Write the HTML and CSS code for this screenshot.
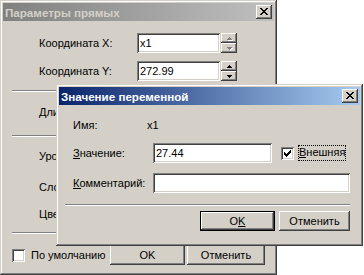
FILE: index.html
```html
<!DOCTYPE html>
<html lang="ru">
<head>
    <meta charset="UTF-8">
    <title>Параметры прямых</title>
    <link rel="stylesheet" href="styles.css">
</head>
<body>
    <div class="desktop">
        <!-- back dialog (inactive) -->
        <div class="window back">
            <div class="titlebar inactive">
                <span class="title">Параметры прямых</span>
                <span class="btn close"><svg width="8" height="7" viewBox="0 0 8 7"><path d="M0 0h2v1H0zM6 0h2v1H6zM1 1h2v1H1zM5 1h2v1H5zM2 2h4v1H2zM3 3h2v1H3zM2 4h4v1H2zM1 5h2v1H1zM5 5h2v1H5zM0 6h2v1H0zM6 6h2v1H6z"/></svg></span>
            </div>
            <div class="back-body">
                <div class="row first">
                    <span class="lbl">Координата X:</span>
                    <span class="edit coord">x1</span>
                    <span class="spin disabled">
                        <span class="btn sb"><svg width="5" height="3" viewBox="0 0 5 3"><path d="M2 0h1v1h1v1h1v1H0V2h1V1h1z"/></svg></span>
                        <span class="btn sb"><svg width="5" height="3" viewBox="0 0 5 3"><path d="M0 0h5v1H4v1H3v1H2V2H1V1H0z"/></svg></span>
                    </span>
                </div>
                <div class="row r2">
                    <span class="lbl">Координата Y:</span>
                    <span class="edit coord">272.99</span>
                    <span class="spin">
                        <span class="btn sb"><svg width="5" height="3" viewBox="0 0 5 3"><path d="M2 0h1v1h1v1h1v1H0V2h1V1h1z"/></svg></span>
                        <span class="btn sb"><svg width="5" height="3" viewBox="0 0 5 3"><path d="M0 0h5v1H4v1H3v1H2V2H1V1H0z"/></svg></span>
                    </span>
                </div>
                <div class="sep s1"></div>
                <div class="row r3"><span class="lbl">Длина</span></div>
                <div class="sep s2"></div>
                <div class="row r4"><span class="lbl">Уровень</span></div>
                <div class="row r5"><span class="lbl">Слой</span></div>
                <div class="row r6"><span class="lbl">Цвет</span></div>
                <div class="sep s3"></div>
                <div class="footer">
                    <span class="check"></span>
                    <span class="check-lbl">По умолчанию</span>
                    <span class="btn push ok-back">OK</span>
                    <span class="btn push cancel-back">Отменить</span>
                </div>
            </div>
        </div>

        <!-- front dialog (active) -->
        <div class="window front">
            <div class="titlebar active">
                <span class="title">Значение переменной</span>
                <span class="btn close"><svg width="8" height="7" viewBox="0 0 8 7"><path d="M0 0h2v1H0zM6 0h2v1H6zM1 1h2v1H1zM5 1h2v1H5zM2 2h4v1H2zM3 3h2v1H3zM2 4h4v1H2zM1 5h2v1H1zM5 5h2v1H5zM0 6h2v1H0zM6 6h2v1H6z"/></svg></span>
            </div>
            <div class="front-body">
                <div class="frow f1">
                    <span class="flbl name-lbl">Имя:</span>
                    <span>x1</span>
                </div>
                <div class="frow f2">
                    <span class="flbl hot">Значение:</span>
                    <span class="edit value">27.44</span>
                    <span class="check checked"><svg width="7" height="7" viewBox="0 0 7 7"><path d="M6 0h1v3H6v1H5v1H4v1H3v1H2V6H1V5H0V2h1v1h1v1h1V3h1V2h1V1h1z"/></svg></span>
                    <span class="focus hot">Внешняя</span>
                </div>
                <div class="frow f3">
                    <span class="flbl hot wide">Комментарий:</span>
                    <span class="edit comment"></span>
                </div>
                <div class="sep fsep"></div>
                <div class="fbuttons">
                    <span class="btn push default">O<span class="ul">K</span></span>
                    <span class="btn push cancel-front">Отменить</span>
                </div>
            </div>
        </div>
    </div>
</body>
</html>
```

FILE: styles.css
```css
body {
    margin: 0;
    background: #fff;
    font-family: "Liberation Sans", Arial, sans-serif;
    font-size: 11px;
    color: #000;
}
.desktop {
    position: relative;
    width: 364px;
    height: 275px;
    overflow: hidden;
}

/* classic window frame */
.window {
    position: absolute;
    box-sizing: border-box;
    padding: 3px;
    background: #d4d0c8;
    box-shadow: inset -1px -1px #404040, inset 1px 1px #d4d0c8, inset -2px -2px #808080, inset 2px 2px #fff;
    display: flex;
    flex-direction: column;
}
.back { left: 0; top: 0; width: 277px; height: 275px; }
.front { left: 56px; top: 84px; width: 307px; height: 162px; }

.titlebar {
    height: 18px;
    display: flex;
    align-items: center;
    padding-left: 2px;
    font-weight: bold;
    font-size: 11.6px;
}
.titlebar .title { flex: 1; }
.inactive { background: linear-gradient(to right, #808080, #c0c0c0); color: #d4d0c8; }
.active { background: linear-gradient(to right, #0a246a, #a6caf0); color: #fff; }

.btn {
    box-sizing: border-box;
    background: #d4d0c8;
    box-shadow: inset -1px -1px #404040, inset 1px 1px #fff, inset -2px -2px #808080, inset 2px 2px #d4d0c8;
    display: flex;
    align-items: center;
    justify-content: center;
}
.close {
    width: 16px;
    height: 14px;
    margin-right: 2px;
    padding: 0 1px 1px 0;
}
svg { display: block; shape-rendering: crispEdges; }

.edit {
    box-sizing: border-box;
    height: 20px;
    background: #fff;
    padding: 0 3px;
    display: flex;
    align-items: center;
    box-shadow: inset 1px 1px #808080, inset -1px -1px #fff, inset 2px 2px #404040, inset -2px -2px #d4d0c8;
}

/* mnemonic underline under the first letter */
.hot {
    line-height: 13px;
    background: linear-gradient(#000, #000) no-repeat 0 11px / 7px 1px;
}
.wide { background-size: 8px 1px; }
.ul { text-decoration: underline; }

/* back dialog */
.back-body { padding-left: 36px; }
.row {
    height: 20px;
    display: flex;
    align-items: center;
}
.lbl { width: 98px; }
.first { margin-top: 12px; }
.r2 { margin-top: 8px; }
.r3 { margin-top: 10px; }
.r4 { margin-top: 9px; }
.r5 { margin-top: 11px; }
.r6 { margin-top: 7px; }
.coord { width: 83px; }
.spin {
    margin-left: 1px;
    display: flex;
    flex-direction: column;
}
.sb { width: 16px; height: 10px; }
.sb svg { fill: #000; }
.disabled .sb svg { fill: #808080; filter: drop-shadow(1px 1px 0 #fff); }

.sep {
    height: 0;
    border-top: 1px solid #808080;
    border-bottom: 1px solid #fff;
}
.back-body .sep { margin-left: -27px; margin-right: 9px; }
.s1 { margin-top: 9px; }
.s2 { margin-top: 13px; }
.s3 { margin-top: 8px; }

.footer {
    margin: 11px 0 0 -27px;
    height: 20px;
    display: flex;
    align-items: center;
}
.check {
    box-sizing: border-box;
    width: 13px;
    height: 13px;
    background: #fff;
    box-shadow: inset 1px 1px #808080, inset -1px -1px #fff, inset 2px 2px #404040, inset -2px -2px #d4d0c8;
    display: flex;
    align-items: center;
    justify-content: center;
}
.check-lbl { margin-left: 6px; width: 79px; }
.push { height: 20px; }
.ok-back { width: 75px; }
.cancel-back { width: 78px; margin-left: 2px; }

/* front dialog */
.front-body { padding-left: 14px; }
.frow {
    height: 20px;
    display: flex;
    align-items: center;
}
.flbl { width: 80px; }
.name-lbl { width: 74px; }
.f1 { margin-top: 10px; }
.f2 { margin-top: 8px; }
.f3 { margin-top: 10px; }
.value { width: 119px; }
.comment { width: 197px; }
.checked { margin-left: 9px; }
.checked svg { fill: #000; }
.focus {
    margin-left: 4px;
    padding: 1px 1px 2px;
    outline: 1px dotted #000;
    outline-offset: -1px;
    background-position: 1px 12px;
}
.fsep { margin: 11px 0 0 -8px; width: 285px; }
.fbuttons {
    margin: 5px 0 0 127px;
    display: flex;
}
.default {
    width: 75px;
    border: 1px solid #000;
}
.cancel-front { width: 71px; margin-left: 4px; }
```
